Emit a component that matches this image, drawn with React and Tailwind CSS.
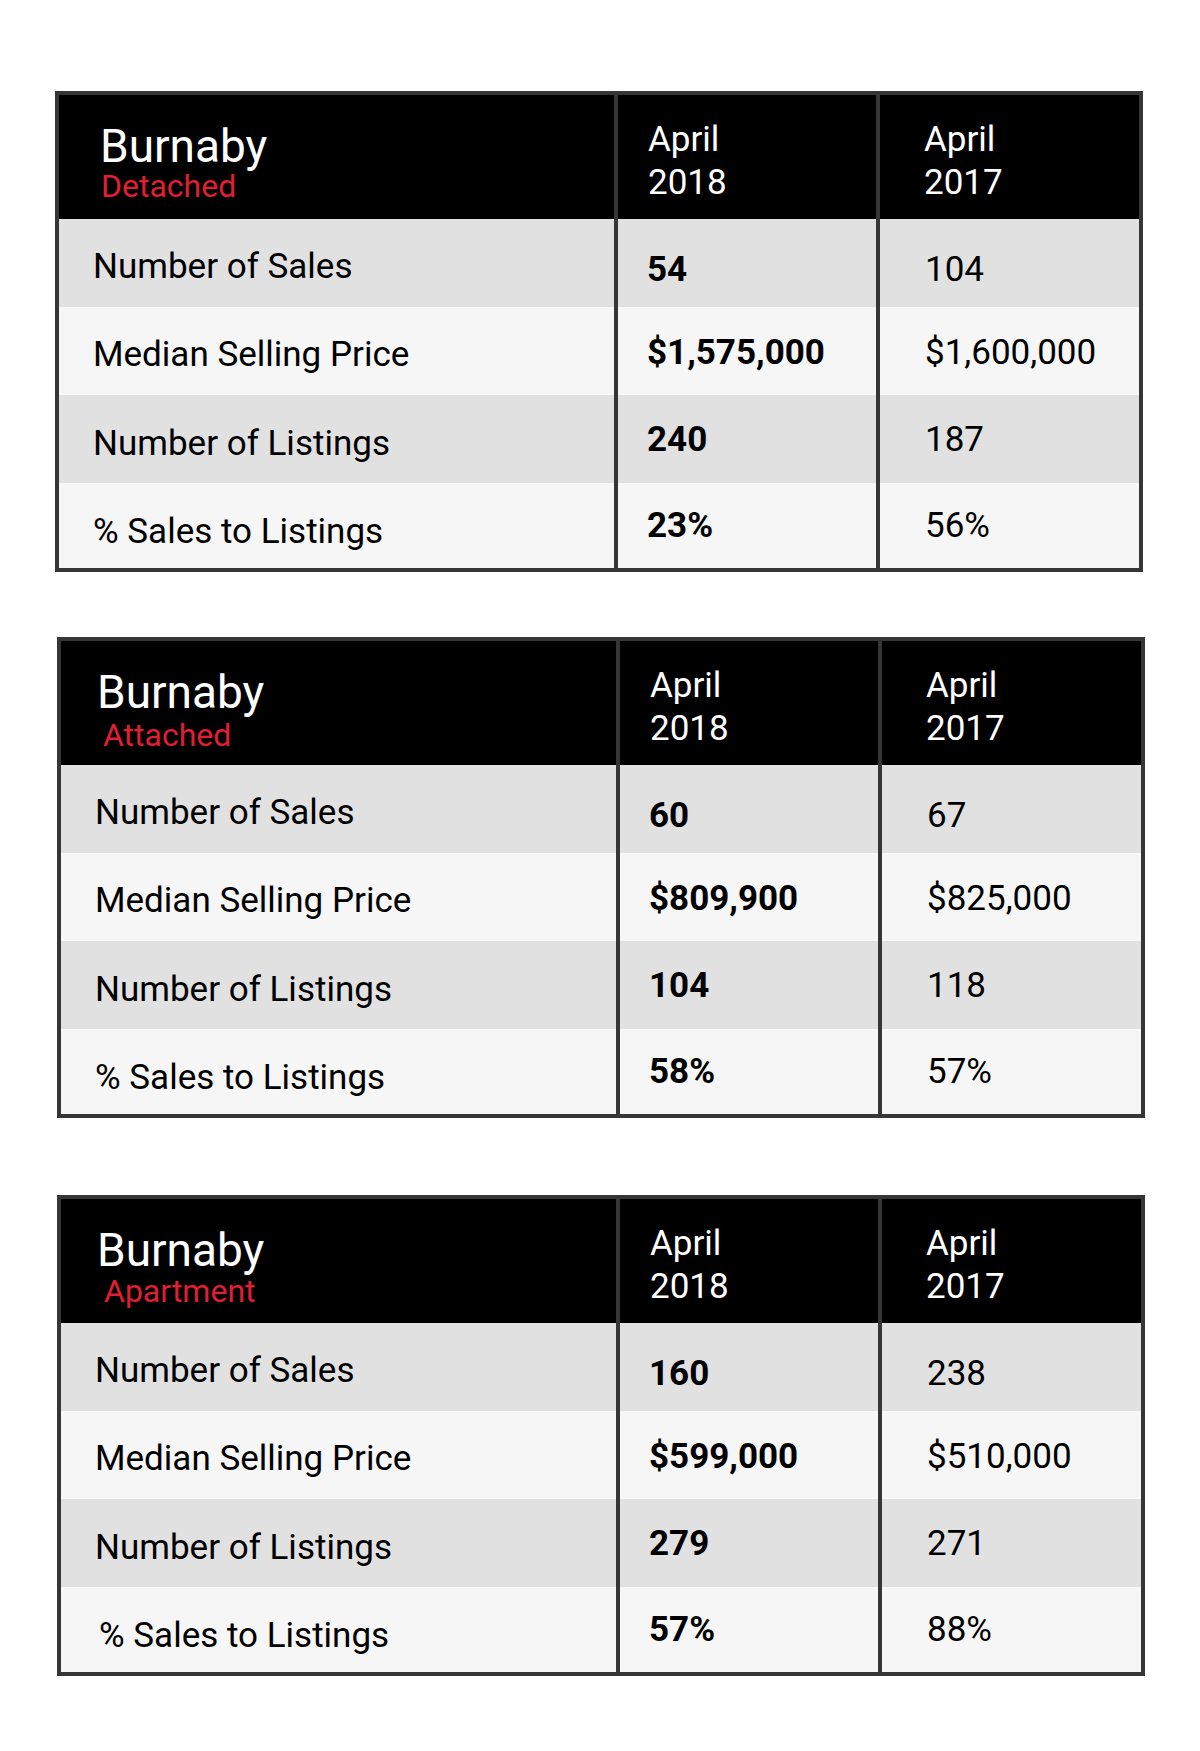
import React from 'react';

const tables = [
    {
        kind: 'Detached',
        wrap: 'mt-[91px] ml-[55px]',
        titlePl: 'pl-[41px]',
        subPl: 'pl-[42px]',
        subGap: 'mt-[1px]',
        labelPl: 'pl-[34px]',
        rows: [
            ['Number of Sales', '54', '104'],
            ['Median Selling Price', '$1,575,000', '$1,600,000'],
            ['Number of Listings', '240', '187'],
            ['% Sales to Listings', '23%', '56%'],
        ],
    },
    {
        kind: 'Attached',
        wrap: 'mt-[65px] ml-[57px]',
        titlePl: 'pl-[36px]',
        subPl: 'pl-[42px]',
        subGap: 'mt-[4px]',
        labelPl: 'pl-[34px]',
        rows: [
            ['Number of Sales', '60', '67'],
            ['Median Selling Price', '$809,900', '$825,000'],
            ['Number of Listings', '104', '118'],
            ['% Sales to Listings', '58%', '57%'],
        ],
    },
    {
        kind: 'Apartment',
        wrap: 'mt-[77px] ml-[57px]',
        titlePl: 'pl-[36px]',
        subPl: 'pl-[43px]',
        subGap: 'mt-[2px]',
        labelPl: 'pl-[34px]',
        lastLabelPl: 'pl-[38px]',
        rows: [
            ['Number of Sales', '160', '238'],
            ['Median Selling Price', '$599,000', '$510,000'],
            ['Number of Listings', '279', '271'],
            ['% Sales to Listings', '57%', '88%'],
        ],
    },
];

// small vertical nudges so the text sits where it does in the original layout
const labelShift = ['pt-[6px]', 'pt-[6px]', 'pt-[8px]', 'pt-[12px]'];
const valueShift = ['pt-[13px]', 'pt-[3px]', 'pt-0', 'pt-0'];
const rowBg = ['bg-[#e1e1e1]', 'bg-[#f6f6f6]', 'bg-[#e1e1e1]', 'bg-[#f6f6f6]'];

function StatsTable({ table }) {
    return (
        <div className={`${table.wrap} w-[1088px] border-4 border-[#363636]`}>
            {/* Header */}
            <div className="grid grid-cols-[555px_262px_1fr] h-[124px] bg-black text-white">
                <div className="pt-[28px]">
                    <div className={`${table.titlePl} text-[46px] leading-[46px]`}>Burnaby</div>
                    <div className={`${table.subPl} ${table.subGap} text-[32px] leading-[32px] text-[#e01e34]`}>
                        {table.kind}
                    </div>
                </div>
                <div className="border-l-4 border-[#363636] pl-[30px] pt-[23px] text-[35px] leading-[43px]">
                    <div>April</div>
                    <div>2018</div>
                </div>
                <div className="border-l-4 border-[#363636] pl-[44px] pt-[23px] text-[35px] leading-[43px]">
                    <div>April</div>
                    <div>2017</div>
                </div>
            </div>

            {/* Rows */}
            {table.rows.map((row, i) => {
                const last = i === table.rows.length - 1;
                const labelPl = last && table.lastLabelPl ? table.lastLabelPl : table.labelPl;
                return (
                    <div
                        key={row[0]}
                        className={`grid grid-cols-[555px_262px_1fr] ${last ? 'h-[85px]' : 'h-[88px]'} ${rowBg[i]} text-black text-[35px] leading-[35px]`}
                    >
                        <div className={`flex items-center ${labelPl} ${labelShift[i]}`}>{row[0]}</div>
                        <div className={`flex items-center border-l-4 border-[#363636] pl-[29px] font-bold ${valueShift[i]}`}>
                            {row[1]}
                        </div>
                        <div className={`flex items-center border-l-4 border-[#363636] pl-[45px] ${valueShift[i]}`}>
                            {row[2]}
                        </div>
                    </div>
                );
            })}
        </div>
    );
}

export default function App() {
    return (
        <div className="w-[1200px] h-[1751px] overflow-hidden bg-white font-['Roboto',sans-serif]">
            {tables.map((t) => (
                <StatsTable key={t.kind} table={t} />
            ))}
        </div>
    );
}
